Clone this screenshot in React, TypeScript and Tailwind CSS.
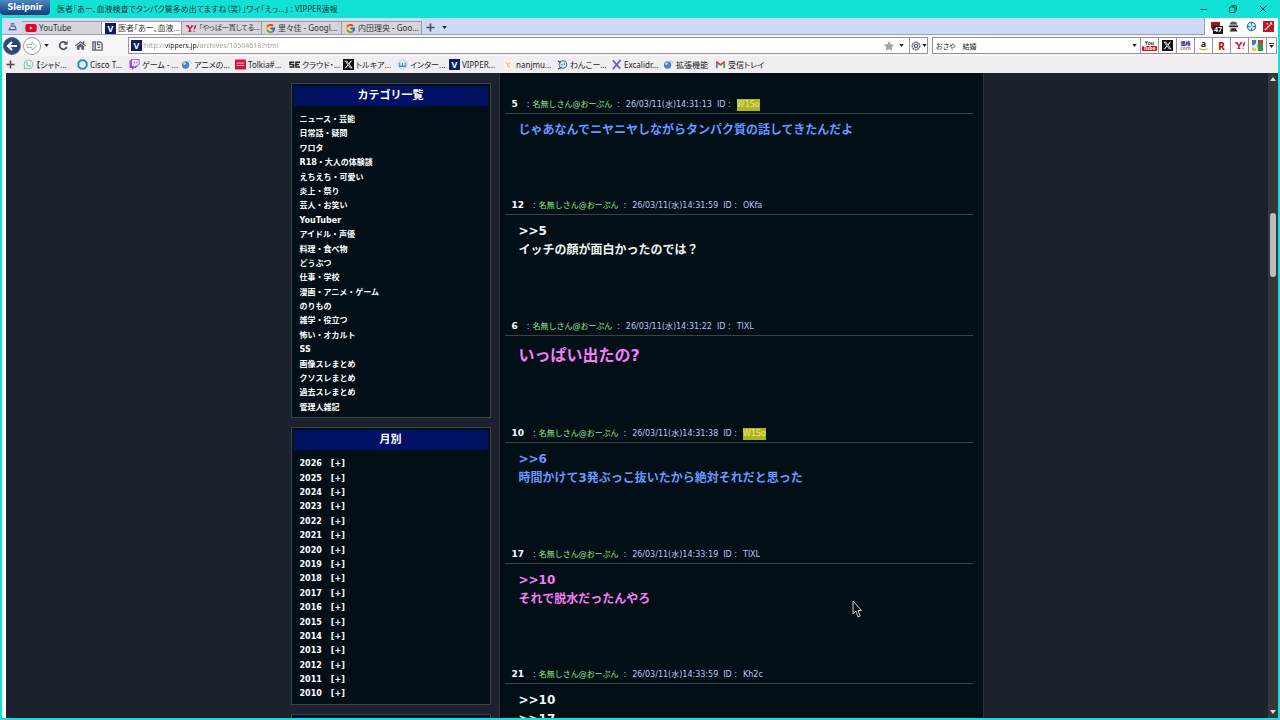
import { useState } from 'react'
import type { ReactNode } from 'react'
import clsx from 'clsx'
import { FaHome, FaStar, FaTwitch, FaWhatsapp, FaYoutube } from 'react-icons/fa'
import { FaXTwitter } from 'react-icons/fa6'
import { FcGoogle } from 'react-icons/fc'

const categories = [
  'ニュース・芸能', '日常話・疑問', 'ワロタ', 'R18・大人の体験談', 'えちえち・可愛い', '炎上・祭り', '芸人・お笑い',
  'YouTuber', 'アイドル・声優', '料理・食べ物', 'どうぶつ', '仕事・学校', '漫画・アニメ・ゲーム', 'のりもの',
  '雑学・役立つ', '怖い・オカルト', 'SS', '画像スレまとめ', 'クソスレまとめ', '過去スレまとめ', '管理人雑記',
]

const years = Array.from({ length: 17 }, (_, i) => 2026 - i)

type Post = { no: number; time: string; id: string; marked?: boolean; style: string; lines: string[] }

const posts: Post[] = [
  { no: 5, time: '14:31:13', id: 'W1So', marked: true, style: 'text-[12px] text-[#6699ff]', lines: ['じゃあなんでニヤニヤしながらタンパク質の話してきたんだよ'] },
  { no: 12, time: '14:31:59', id: 'OKfa', style: 'text-[12px] text-[#f4f4f4]', lines: ['>>5', 'イッチの顔が面白かったのでは？'] },
  { no: 6, time: '14:31:22', id: 'TlXL', style: 'text-[16px] text-[#f57cf8]', lines: ['いっぱい出たの?'] },
  { no: 10, time: '14:31:38', id: 'W1So', marked: true, style: 'text-[12px] text-[#6699ff]', lines: ['>>6', '時間かけて3発ぶっこ抜いたから絶対それだと思った'] },
  { no: 17, time: '14:33:19', id: 'TlXL', style: 'text-[12px] text-[#f57cf8]', lines: ['>>10', 'それで脱水だったんやろ'] },
  { no: 21, time: '14:33:59', id: 'Kh2c', style: 'text-[12px] text-[#f4f4f4]', lines: ['>>10', '>>17'] },
]

/* Icons */

function VIcon() {
  return (
    <span className="flex size-[11px] shrink-0 items-center justify-center bg-[#0c1c66] text-[9px] leading-none font-bold text-white">V</span>
  )
}

function YahooIcon() {
  return (
    <svg viewBox="0 0 12 10" className="h-[9px] w-[12px] shrink-0" fill="none" stroke="#d0103c">
      <path d="M.5 2h3.500M6 2h2.500M2.200 2.200l2.600 3 2.600-3M4.800 5v3M3.200 8.200h3.200" strokeWidth="1.500" />
      <path d="M11.200 1.500 9.600 5.800M8.800 8.200h1.200" strokeWidth="1.600" />
    </svg>
  )
}

function GlobeIcon() {
  return (
    <svg viewBox="0 0 12 12" className="size-[11px] shrink-0">
      <circle cx="5" cy="6.5" r="4" fill="#4a80cc" />
      <circle cx="3.8" cy="5" r="1.5" fill="#c2dcf8" />
      <path d="M7 2.500c2-1 4 .2 4 2.500" stroke="#a9bfe0" fill="none" />
    </svg>
  )
}

function GmailIcon() {
  return (
    <svg viewBox="0 0 12 12" className="size-[11px] shrink-0" fill="none" strokeWidth="2">
      <path d="M2 3v7" stroke="#4285f4" />
      <path d="M10 3v7" stroke="#34a853" />
      <path d="M1.500 3 6 6.500 10.500 3" stroke="#ea4335" />
    </svg>
  )
}

function XIcon() {
  return (
    <span className="flex size-[11px] shrink-0 items-center justify-center bg-[#101010] text-white"><FaXTwitter size={9} /></span>
  )
}

function Caret() {
  return (
    <svg viewBox="0 0 6 4" className="h-[3px] w-[5px] shrink-0"><path d="M0 0h6L3 4z" fill="#222" /></svg>
  )
}

function Plus({ className }: { className?: string }) {
  return (
    <svg viewBox="0 0 10 10" className={clsx('size-[9px] shrink-0', className)}><path d="M5 .5v9M.5 5h9" stroke="#4a4f5a" strokeWidth="1.8" /></svg>
  )
}

const tabs = [
  { label: 'YouTube', icon: <span className="flex size-[12px] shrink-0 items-center text-[#e4002b]"><FaYoutube size={12} /></span> },
  { label: '医者「あー、血液...', icon: <VIcon /> },
  { label: '「やっぱ一貫してる...', icon: <YahooIcon />, small: true },
  { label: '里々佳 - Googl...', icon: <FcGoogle size={11} className="shrink-0" /> },
  { label: '内田理央 - Goo...', icon: <FcGoogle size={11} className="shrink-0" /> },
]

const bookmarks: { label: string; icon: ReactNode; wide?: boolean }[] = [
  { label: '【シャド...', icon: <FaWhatsapp size={11} color="#5fc9a0" />, wide: true },
  {
    label: 'Cisco T...',
    icon: <svg viewBox="0 0 12 12" className="size-[11px]"><path d="M4 1.500h4L10.500 4v4L8 10.500H4L1.500 8V4z" fill="none" stroke="#1688c8" strokeWidth="2" /></svg>,
  },
  { label: 'ゲーム - ...', icon: <FaTwitch size={11} color="#9146ff" /> },
  { label: 'アニメの...', icon: <GlobeIcon />, wide: true },
  {
    label: 'Tolkia#...', wide: true,
    icon: <svg viewBox="0 0 12 12" className="size-[11px]"><rect width="12" height="11" y=".5" rx="1" fill="#d8123f" /><path d="M2 4.500h8M2 7h8" stroke="#ffd3dc" /></svg>,
  },
  {
    label: 'クラウド・...', wide: true,
    icon: <svg viewBox="0 0 12 12" className="size-[11px]" fill="none" stroke="#222" strokeWidth="1.600"><path d="M5.500 3.500H1v2.500h4v2.800H.5M12 3.500H7.500v5.300H12M7.500 6H11" /></svg>,
  },
  { label: 'トルキア...', icon: <XIcon />, wide: true },
  {
    label: 'インター...',
    icon: <svg viewBox="0 0 12 12" className="size-[11px]" fill="none"><circle cx="6" cy="6" r="5" stroke="#9cc9e6" /><path d="M3 4v4h3V4v4h3V4" stroke="#2c86c4" strokeWidth="1.200" /></svg>,
  },
  { label: 'VIPPER...', icon: <VIcon />, wide: true },
  {
    label: 'nanjmu...', wide: true,
    icon: <svg viewBox="0 0 12 12" className="size-[11px]"><rect x="1" y="1" width="10" height="10" fill="#fdf3ea" /><path d="M3 3l2 3 3-2M5 6v2l3 1" stroke="#dba183" fill="none" /></svg>,
  },
  {
    label: 'わんこー...', wide: true,
    icon: <svg viewBox="0 0 12 12" className="size-[11px]"><circle cx="6.500" cy="6" r="4.300" fill="#cfe0f2" stroke="#46658f" /><path d="M1 2l3 2M1 11l4-2M5 6h1M8 5v1" stroke="#304a70" strokeWidth="1.300" /></svg>,
  },
  {
    label: 'Excalidr...',
    icon: <svg viewBox="0 0 12 12" className="size-[11px]"><path d="M2 1.500l8 9M10.500 1L2 11" stroke="#6a5fd4" strokeWidth="2" /></svg>,
  },
  { label: '拡張機能', icon: <GlobeIcon /> },
  { label: '受信トレイ', icon: <GmailIcon /> },
]

const engines: { name: string; icon: ReactNode }[] = [
  {
    name: 'YouTube',
    icon: <span className="flex flex-col items-center text-[5px] leading-[5px] font-bold text-[#333]">You<span className="rounded-[1px] bg-[#d01020] px-px text-white">Tube</span></span>,
  },
  { name: 'X', icon: <XIcon /> },
  {
    name: '価格.com',
    icon: <span className="flex flex-col items-center text-[5px] leading-[5px] font-bold text-[#1020a0]">価格<span className="text-[#d07a50]">com</span></span>,
  },
  {
    name: 'Amazon',
    icon: (
      <span className="flex flex-col items-center text-[9px] leading-[8px] font-bold text-[#222]">
        a
        <svg viewBox="0 0 10 3" className="h-[3px] w-[9px]"><path d="M.5.5c3 2 6 2 9 0" fill="none" stroke="#f0a020" strokeWidth="1.300" /></svg>
      </span>
    ),
  },
  { name: '楽天', icon: <span className="text-[10px] leading-none font-bold text-[#bf0000]">R</span> },
  { name: 'Yahoo', icon: <YahooIcon /> },
  {
    name: 'Google',
    icon: (
      <svg viewBox="0 0 12 12" className="size-[11px]">
        <path d="M0 0h5v6H0z" fill="#3f77cf" /><path d="M6 0h6v5H6z" fill="#d53a2d" /><path d="M6 4h6v8H6z" fill="#2b9a48" /><path d="M0 8h5v4H0z" fill="#f0c63e" />
        <path d="M5.500 0v4l-4 3 4 2v3" stroke="#fff" strokeWidth="1.500" fill="none" />
      </svg>
    ),
  },
]

/* Browser chrome */

function TitleBar() {
  return (
    <header className="flex h-[18px] shrink-0 items-center bg-[#12e2d6]">
      <div className="flex h-[15px] w-[50px] items-center justify-center self-start rounded-b-sm bg-linear-to-b from-[#4a8ac0] to-[#17397c] font-['DejaVu_Sans'] text-[8px] font-bold text-white">
        Sleipnir
      </div>
      <h1 className="ml-[7px] flex-1 truncate text-[8px] text-[#12383a]">
        医者「あー、血液検査でタンパク質多め出てますね（笑）」ワイ「えっ...」 : VIPPER速報
      </h1>
      <div className="flex gap-5 pr-3">
        <button aria-label="最小化" className="flex size-[10px] items-center justify-center"><span className="h-px w-[7px] bg-[#0d4a4a]" /></button>
        <button aria-label="元に戻す" className="size-[10px]">
          <svg viewBox="0 0 10 10" fill="none" stroke="#0d3a3a"><rect x="1.500" y="3" width="5.500" height="5.500" rx="1" /><path d="M3.500 1.500H7A1.500 1.500 0 0 1 8.500 3v3.500" /></svg>
        </button>
        <button aria-label="閉じる" className="size-[10px]">
          <svg viewBox="0 0 10 10" stroke="#0d3a3a"><path d="M2 2l6 6M8 2L2 8" /></svg>
        </button>
      </div>
    </header>
  )
}

function TabStrip() {
  const [active, setActive] = useState(1)
  return (
    <div className="flex h-[17px] shrink-0 bg-white">
      <div className="flex flex-1 items-end border-r border-b border-[#9aa2b4] bg-[#cddaf6]">
        <button aria-label="タブ一覧" className="flex h-[15px] w-5 items-center justify-center">
          <svg viewBox="0 0 10 9" className="h-2 w-[9px]" fill="none" stroke="#4c5a74"><path d="M3 1h4M2.500 3.500h5L9 6M.5 7.500h9M2 5v2" strokeWidth="1.300" /></svg>
        </button>
        {tabs.map((t, i) => (
          <button
            key={t.label}
            onClick={() => setActive(i)}
            className={clsx(
              'flex h-[13px] w-20 items-center gap-[2px] border-t border-r border-[#9b9ba3] pl-[3px] whitespace-nowrap text-[#333]',
              t.small ? 'text-[7px]' : 'text-[8px]',
              i === active ? 'bg-white' : 'bg-[#d5d5dc]',
            )}
          >
            {t.icon}
            {t.label}
          </button>
        ))}
        <button aria-label="新しいタブ" className="ml-1 flex h-[13px] items-center"><Plus /></button>
        <button aria-label="タブメニュー" className="ml-[7px] flex h-[13px] items-center"><Caret /></button>
      </div>
      <div className="flex w-[73px] items-center justify-between pr-1 pl-[5px]">
        <button aria-label="広告ブロック" className="relative size-[12px]">
          <svg viewBox="0 0 12 12"><path d="M1 1h9v5c0 2-2 4-4.500 5C3 10 1 8 1 6z" fill="#a3121e" /></svg>
          <span className="absolute top-[5px] left-[3px] bg-[#151515] px-px text-[7px] leading-[8px] font-bold text-white">47</span>
        </button>
        <button aria-label="ユーザーエージェント" className="size-[11px]">
          <svg viewBox="0 0 12 12"><path d="M2 4a4 3.500 0 0 1 8 0z" fill="#44617c" /><rect x="2" y="4" width="8" height="5" fill="#e0b79a" /><path d="M1 5h10v1.500H1z" fill="#222" /><path d="M1.500 11.500 4 8h4l2.500 3.500z" fill="#26344a" /></svg>
        </button>
        <button aria-label="拡張" className="size-[11px]">
          <svg viewBox="0 0 12 12" fill="none" stroke="#2a83ab"><circle cx="6" cy="6" r="4.500" strokeWidth="1.400" /><path d="M6 2v3M6 7v3M2 6h3M7 6h3" strokeWidth="1.400" /></svg>
        </button>
        <button aria-label="ツール" className="size-[11px]">
          <svg viewBox="0 0 12 12"><rect width="12" height="12" fill="#c01622" /><path d="M2 10l6-6M8 2l2 2M9 1v1M4 3h1" stroke="#fff" strokeWidth="1.400" /></svg>
        </button>
      </div>
    </div>
  )
}

function Toolbar() {
  return (
    <div className="flex h-[21px] shrink-0 items-center bg-[#f6f5f8] pr-px">
      <button aria-label="戻る" className="ml-px flex size-[18px] shrink-0 items-center justify-center rounded-full border border-[#5a6d92] bg-[#2b4679]">
        <svg viewBox="0 0 12 12" className="size-[12px]"><path d="M6 2 2 6l4 4M2.500 6H11" fill="none" stroke="#fff" strokeWidth="2.200" /></svg>
      </button>
      <button aria-label="進む" className="ml-[2px] flex size-[18px] shrink-0 items-center justify-center rounded-full border border-[#9c9ca4] bg-white">
        <svg viewBox="0 0 12 12" className="size-[12px]"><path d="M1 4.500h5V2l4.500 4L6 10V7.500H1z" fill="#fff" stroke="#b0b0b8" /></svg>
      </button>
      <div className="ml-[3px] flex w-[84px] items-center">
        <Caret />
        <button aria-label="更新" className="ml-[9px] size-[11px]">
          <svg viewBox="0 0 12 12" fill="none"><path d="M9.500 7.500A4 4 0 1 1 8.500 3.200" stroke="#4b5160" strokeWidth="1.900" /><path d="M10.500.8v4.400H6z" fill="#4b5160" /></svg>
        </button>
        <button aria-label="ホーム" className="ml-[6px]"><FaHome size={11} color="#5b6270" /></button>
        <button aria-label="フォルダ" className="ml-[6px] size-[11px]">
          <svg viewBox="0 0 12 12" fill="none" stroke="#5b6270" strokeWidth="1.500"><path d="M1 2h2.500v9H1zM3.500 11H11V4L9 2H6v3h3M6 8h3" /></svg>
        </button>
      </div>
      <div className="flex h-[17px] flex-1 items-center border border-[#9a9299] bg-white pl-[2px]">
        <VIcon />
        <input
          aria-label="アドレス"
          defaultValue="http://vippers.jp/archives/10504618.html"
          className="ml-[2px] h-full min-w-0 flex-1 bg-[linear-gradient(90deg,#9a9a9a_0_22px,#222_22px_54px,#9a9a9a_54px)] bg-clip-text text-[7px] text-transparent outline-none"
        />
        <button aria-label="お気に入り"><FaStar size={10} color="#a4a4aa" /></button>
        <button aria-label="履歴" className="mx-[5px]"><Caret /></button>
        <button aria-label="エンジン" className="flex h-full w-[18px] items-center justify-center gap-px border-l border-[#9a9299]">
          <svg viewBox="0 0 12 12" className="size-[10px]" fill="none" stroke="#59617a"><circle cx="6" cy="6" r="4.500" strokeWidth="1.800" strokeDasharray="2.200 .8" /><circle cx="6" cy="6" r="2" strokeWidth="1.500" /></svg>
          <Caret />
        </button>
      </div>
      <div className="ml-1 flex h-[17px] w-[345px] items-center border border-[#9a9299] bg-white">
        <input aria-label="検索" defaultValue="おさや　結婚" className="h-full min-w-0 flex-1 pl-[3px] text-[7px] text-[#222] outline-none" />
        <button aria-label="検索履歴" className="mr-[3px]"><Caret /></button>
        {engines.map(e => (
          <button key={e.name} aria-label={e.name} className="flex h-full w-[18px] shrink-0 items-center justify-center overflow-hidden border-l border-[#9a9299]">
            {e.icon}
          </button>
        ))}
        <button aria-label="その他" className="flex h-full w-[10px] shrink-0 flex-col items-center justify-center gap-px border-l border-[#9a9299]">
          <span className="h-px w-[5px] bg-[#222]" />
          <Caret />
        </button>
      </div>
    </div>
  )
}

function BookmarkBar() {
  return (
    <nav className="flex h-[17px] shrink-0 items-center overflow-hidden bg-[#f0eef1] pl-1">
      <Plus className="mr-2" />
      {bookmarks.map(b => (
        <a
          key={b.label}
          href="#"
          className={clsx('flex shrink-0 items-center gap-[2px] text-[8px] whitespace-nowrap text-[#222]', b.wide ? 'w-[54px]' : 'w-[52px]')}
        >
          {b.icon}
          {b.label}
        </a>
      ))}
    </nav>
  )
}

/* Page */

function SideBox({ title, children }: { title?: string; children?: ReactNode }) {
  return (
    <section className="mb-[9px] border border-[#39434a] bg-[#020f17] p-[2px]">
      <h2 className="h-5 bg-linear-to-r from-[#001060] via-[#001168] to-[#001060] text-center text-[11px] leading-[20px] font-bold text-white">{title}</h2>
      {children}
    </section>
  )
}

function PostItem({ post }: { post: Post }) {
  return (
    <article className="mb-[58px]">
      <div className="flex h-[17px] items-center border-b border-[#3a4244] pl-[7px] text-[8px] whitespace-nowrap text-[#b9c6f2]">
        <span className="text-[9px] font-bold text-white">{post.no}</span>
        <span className="ml-[9px]">:</span>
        <span className="ml-[3px] text-[#8fe889]">名無しさん@おーぷん</span>
        <span className="ml-[5px]">:</span>
        <span className="ml-[6px]">26/03/11(水){post.time}</span>
        <span className="ml-[5px]">ID :</span>
        <span className={clsx('ml-[6px] leading-[12px]', post.marked && 'bg-[#b3b510] text-[#dfe6b8]')}>{post.id}</span>
      </div>
      <div className={clsx('pt-[7px] pl-[14px] leading-[1.6] font-bold', post.style)}>
        {post.lines.map(l => <p key={l}>{l}</p>)}
      </div>
    </article>
  )
}

function ScrollBar() {
  return (
    <div className="flex w-[10px] shrink-0 flex-col items-center bg-[#33393b] py-1">
      <svg viewBox="0 0 6 4" className="h-1 w-[6px]"><path d="M3 0l3 4H0z" fill="#d8d8d8" /></svg>
      <div className="flex-[131]" />
      <div className="h-16 w-[6px] rounded-full bg-[#bdbdbf]" />
      <div className="flex-[430]" />
      <svg viewBox="0 0 6 4" className="h-1 w-[6px]"><path d="M0 0h6L3 4z" fill="#d8d8d8" /></svg>
    </div>
  )
}

export default function App() {
  return (
    <div className="relative flex h-screen flex-col overflow-hidden bg-[#12e2d6] font-['Noto_Sans','Noto_Sans_CJK_JP',sans-serif] [font-feature-settings:'palt']">
      <TitleBar />
      <div className="mx-[2px] mb-[2px] flex min-h-0 flex-1 flex-col">
        <TabStrip />
        <Toolbar />
        <BookmarkBar />
        <div className="flex min-h-0 flex-1 border-l-4 border-white bg-[#1c222d] font-['DejaVu_Sans','Noto_Sans_CJK_JP',sans-serif] [font-feature-settings:normal]">
          <div className="min-w-0 flex-1 overflow-hidden">
            <div className="mx-auto flex h-full w-full max-w-[693px] gap-2">
              <aside className="w-[200px] shrink-0 pt-[10px]">
                <SideBox title="カテゴリ一覧">
                  <ul className="pt-[7px] pl-[6px] text-[8px] leading-[1.8] font-bold text-white">
                    {categories.map(c => <li key={c}><a href="#">{c}</a></li>)}
                  </ul>
                </SideBox>
                <SideBox title="月別">
                  <ul className="pt-[7px] pl-[6px] text-[8px] leading-[1.8] font-bold text-white">
                    {years.map(y => (
                      <li key={y} className="flex gap-[9px]">
                        <span>{y}</span>
                        <button aria-label={`${y}年を開く`}>[+]</button>
                      </li>
                    ))}
                  </ul>
                </SideBox>
                <SideBox />
              </aside>
              <main className="h-full flex-1 overflow-hidden border-x border-[#2a323a] bg-[#020f17] pt-6 pr-[10px] pl-[5px]">
                {posts.map(p => <PostItem key={p.no} post={p} />)}
              </main>
            </div>
          </div>
          <ScrollBar />
        </div>
      </div>
      {/* Mouse pointer */}
      <svg viewBox="0 0 10 18" className="absolute top-[600px] left-[852px] h-[18px] w-[10px]">
        <path d="M1 1v13l3-2.800L6 17l2.200-1L6 10.500h3.500z" fill="#050a0e" stroke="#e8e8e8" strokeWidth=".9" />
      </svg>
    </div>
  )
}
